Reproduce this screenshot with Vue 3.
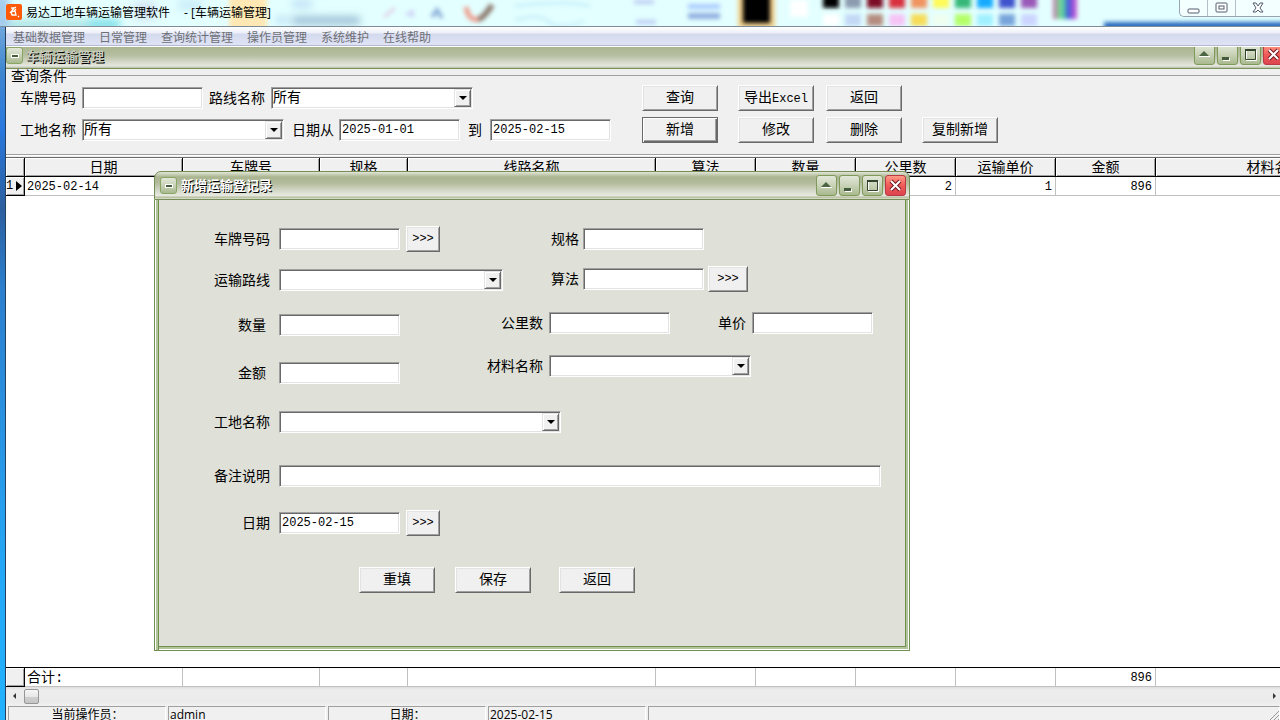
<script setup>
import { ref } from 'vue'

const menus = ['基础数据管理', '日常管理', '查询统计管理', '操作员管理', '系统维护', '在线帮助']

const columns = [
  { name: '日期', width: 158 },
  { name: '车牌号', width: 137 },
  { name: '规格', width: 88 },
  { name: '线路名称', width: 248 },
  { name: '算法', width: 100 },
  { name: '数量', width: 100 },
  { name: '公里数', width: 100 },
  { name: '运输单价', width: 100 },
  { name: '金额', width: 100 },
  { name: '材料名称', width: 238 }
]

const rows = [['2025-02-14', '', '', '', '', '', '2', '1', '896', '']]
const totals = ['合计:', '', '', '', '', '', '', '', '896', '']

const dateFrom = ref('2025-01-01')
const dateTo = ref('2025-02-15')
const recordDate = ref('2025-02-15')

// blurred palette that shines through the glass title bar
const swatches = [
  { x: 824, top: '#000', bottom: '#fff' },
  { x: 846, top: '#8c9bb0', bottom: '#c3d8f5' },
  { x: 868, top: '#7d1028', bottom: '#b58c80' },
  { x: 890, top: '#d8303f', bottom: '#f5c4f5' },
  { x: 912, top: '#f09460', bottom: '#f7dc58' },
  { x: 934, top: '#fffb58', bottom: '#effff0' },
  { x: 956, top: '#35b878', bottom: '#b4ff68' },
  { x: 978, top: '#18aaff', bottom: '#a0f0ff' },
  { x: 1000, top: '#4052cc', bottom: '#78a4dc' },
  { x: 1022, top: '#9a58b8', bottom: '#ccd4ff' }
]
</script>

<template>
  <div class="desktop">
    <div class="app">
      <header class="titlebar">
        <svg class="glass" viewBox="0 0 1280 26" preserveAspectRatio="none" aria-hidden="true">
          <defs>
            <filter id="soft" x="-20%" y="-40%" width="140%" height="180%"><feGaussianBlur stdDeviation="2" /></filter>
            <filter id="softer" x="-20%" y="-40%" width="140%" height="180%"><feGaussianBlur stdDeviation="4" /></filter>
            <linearGradient id="rainbow">
              <stop offset="0" stop-color="#d070b0" />
              <stop offset="0.35" stop-color="#60e890" />
              <stop offset="0.65" stop-color="#4050e0" />
              <stop offset="1" stop-color="#e060d0" />
            </linearGradient>
          </defs>
          <rect width="1280" height="26" fill="#e3ffff" />
          <g filter="url(#softer)">
            <rect x="-5" y="-5" width="14" height="36" fill="#9fc7ec" />
            <rect x="10" y="20" width="80" height="10" fill="#a9e3e2" />
            <rect x="88" y="20" width="32" height="9" fill="#71dbe5" />
            <rect x="134" y="2" width="22" height="18" fill="#d4e4f2" />
            <rect x="178" y="0" width="24" height="10" fill="#c8ecf9" />
            <rect x="292" y="17" width="68" height="7" fill="#8fb4cf" />
            <path d="M292 4h20M276 20h12" stroke="#b6d8f3" stroke-width="6" />
          </g>
          <g filter="url(#soft)">
            <rect x="229" y="-4" width="38" height="34" fill="#ffe8b4" />
            <path d="M384 17l11-9" stroke="#e2d2ea" stroke-width="3" />
            <path d="M404 14l10-5v9z" fill="#d0d6f6" />
            <path d="M432 17l5-7 5 8" fill="none" stroke="#8fb0da" stroke-width="4" />
            <path d="M514 6q52-6 76 0M515 20q25-7 34 2t35-1" fill="none" stroke="#cdf2fa" stroke-width="4" />
            <path d="M634 2h20M636 22h20" stroke="#c2d4f6" stroke-width="5" />
            <rect x="688" y="4" width="32" height="5" fill="#a9cbff" />
            <rect x="688" y="13" width="32" height="6" fill="#8faee0" />
            <rect x="738" y="-4" width="37" height="32" fill="#f2cf8a" />
            <rect x="790" y="0" width="18" height="17" fill="#fff" />
          </g>
          <g filter="url(#soft)">
            <path d="M466 7q3 15 13 12" fill="none" stroke="#ef9d8e" stroke-width="5" />
            <path d="M478 19q5 0 14-14" fill="none" stroke="#8c7a70" stroke-width="6" />
            <rect x="743" y="-6" width="27" height="29" fill="#000" />
            <g v-for="s in swatches" :key="s.x">
              <rect :x="s.x - 1" y="-6" width="16" height="14" :fill="s.top" />
              <rect :x="s.x - 1" y="14" width="16" height="12" :fill="s.bottom" />
            </g>
            <rect x="1053" y="-6" width="24" height="25" fill="url(#rainbow)" />
            <rect x="1104" y="22" width="190" height="8" fill="#2b6cc0" />
          </g>
        </svg>
        <div class="caption">
          <svg class="logo" viewBox="0 0 16 16" aria-hidden="true">
            <rect width="16" height="16" rx="2" fill="#ff5a0a" />
            <path d="M5 4h3l2-1M8 4L5 8l4-1 1 4H6l-1-3M8 7l2-2M12 12l1 1" fill="none" stroke="#fff" stroke-width="1.3" />
          </svg>
          <span>易达工地车辆运输管理软件</span>
          <span class="sub">- [车辆运输管理]</span>
        </div>
        <div class="sys-buttons">
          <button type="button" aria-label="最小化">
            <svg viewBox="0 0 14 12"><rect x="1" y="7" width="11" height="4" rx="1" fill="#fff" stroke="#555c70" /></svg>
          </button>
          <button type="button" aria-label="还原">
            <svg viewBox="0 0 14 12"><rect x="1" y="1" width="11" height="9" rx="1" fill="#fff" stroke="#555c70" /><rect x="4" y="4" width="5" height="3" fill="#fff" stroke="#555c70" /></svg>
          </button>
          <button type="button" class="sys-close" aria-label="关闭">
            <svg viewBox="0 0 14 12"><path d="M2 1h3l2 3 2-3h3L9 6l3 4H9L7 8l-2 2H2l3-4z" fill="#fff" stroke="#555c70" /></svg>
          </button>
        </div>
      </header>

      <nav class="menubar">
        <button v-for="menu in menus" :key="menu" type="button">{{ menu }}</button>
      </nav>

      <div class="skin-bar main-bar">
        <button type="button" class="skin-btn skin-menu" aria-label="窗口菜单"><i></i></button>
        <h1 class="skin-title">车辆运输管理</h1>
        <div class="skin-controls">
          <button type="button" class="skin-btn" aria-label="卷起">
            <svg viewBox="0 0 19 19"><path d="M4 11l5-5 5 5z" fill="#4c6643" /><path d="M4 11.500h11" stroke="#fff" /></svg>
          </button>
          <button type="button" class="skin-btn" aria-label="最小化子窗口">
            <svg viewBox="0 0 19 19"><path d="M5 13h7v3H5z" fill="#fff" /><path d="M4 12h7v3H4z" fill="#435a3b" /></svg>
          </button>
          <button type="button" class="skin-btn" aria-label="最大化子窗口">
            <svg viewBox="0 0 19 19"><path d="M5.500 5.500h10v10h-10z" fill="none" stroke="#fff" /><path d="M4.500 4.500h10v10h-10z" fill="none" stroke="#34452d" /><path d="M4 5h11" stroke="#34452d" stroke-width="2" /></svg>
          </button>
          <button type="button" class="skin-btn skin-close" aria-label="关闭子窗口">
            <svg viewBox="0 0 19 19"><path d="M5 5l9 9M14 5l-9 9" stroke="#721820" stroke-width="4" /><path d="M5 5l9 9M14 5l-9 9" stroke="#fff" stroke-width="2" /></svg>
          </button>
        </div>
      </div>

      <fieldset class="query">
        <legend>查询条件</legend>
        <div class="filters">
          <div class="filter-row">
            <label for="q-plate">车牌号码</label>
            <input id="q-plate" class="box" type="text" />
            <label for="q-route">路线名称</label>
            <span class="combo combo-m"><select id="q-route"><option>所有</option></select></span>
          </div>
          <div class="filter-row">
            <label for="q-site">工地名称</label>
            <span class="combo combo-m"><select id="q-site"><option>所有</option></select></span>
            <label for="q-from" class="label-date">日期从</label>
            <input id="q-from" v-model="dateFrom" class="box" type="text" />
            <label for="q-to" class="label-date">到</label>
            <input id="q-to" v-model="dateTo" class="box" type="text" />
          </div>
        </div>
        <div class="actions">
          <button type="button" class="btn">查询</button>
          <button type="button" class="btn">导出<span class="latin">Excel</span></button>
          <button type="button" class="btn">返回</button>
          <span></span>
          <button type="button" class="btn btn-default">新增</button>
          <button type="button" class="btn">修改</button>
          <button type="button" class="btn">删除</button>
          <button type="button" class="btn">复制新增</button>
        </div>
      </fieldset>

      <main class="grid-area">
        <table class="grid">
          <colgroup>
            <col class="col-mark" />
            <col v-for="c in columns" :key="c.name" :style="{ width: c.width + 'px' }" />
          </colgroup>
          <thead>
            <tr>
              <th></th>
              <th v-for="c in columns" :key="c.name">{{ c.name }}</th>
            </tr>
          </thead>
          <tbody>
            <tr v-for="(row, r) in rows" :key="r">
              <th class="mark"><span class="mark-in">{{ r + 1 }}<i></i></span></th>
              <td v-for="(cell, i) in row" :key="i" :class="{ num: i > 3 }">{{ cell }}</td>
            </tr>
          </tbody>
        </table>
      </main>

      <div class="totals">
        <table class="grid">
          <colgroup>
            <col class="col-mark" />
            <col v-for="c in columns" :key="c.name" :style="{ width: c.width + 'px' }" />
          </colgroup>
          <tbody>
            <tr>
              <th></th>
              <td v-for="(cell, i) in totals" :key="i" :class="{ num: i > 3, sum: i === 0 }">{{ cell }}</td>
            </tr>
          </tbody>
        </table>
      </div>

      <div class="scrollbar">
        <svg viewBox="0 0 5 8" aria-hidden="true"><path d="M4 1v6L1 4z" fill="#333" /></svg>
        <span class="thumb"></span>
        <svg class="scroll-right" viewBox="0 0 5 8" aria-hidden="true"><path d="M1 1v6l3-3z" fill="#333" /></svg>
      </div>

      <footer class="status">
        <span class="pane center">当前操作员：</span>
        <span class="pane">admin</span>
        <span class="pane center">日期：</span>
        <span class="pane">2025-02-15</span>
        <span class="pane rest">
          <svg class="grip" viewBox="0 0 10 10" aria-hidden="true"><path d="M0 10L10 0M4 10l6-6M8 10l2-2" stroke="#999" /></svg>
        </span>
      </footer>
    </div>

    <section class="dialog" role="dialog" aria-labelledby="dialog-title">
      <div class="skin-bar dialog-bar">
        <button type="button" class="skin-btn skin-menu" aria-label="对话框菜单"><i></i></button>
        <h2 id="dialog-title" class="skin-title">新增运输登记录</h2>
        <div class="skin-controls">
          <button type="button" class="skin-btn" aria-label="卷起对话框">
            <svg viewBox="0 0 19 19"><path d="M4 11l5-5 5 5z" fill="#4c6643" /><path d="M4 11.500h11" stroke="#fff" /></svg>
          </button>
          <button type="button" class="skin-btn" aria-label="最小化对话框">
            <svg viewBox="0 0 19 19"><path d="M5 13h7v3H5z" fill="#fff" /><path d="M4 12h7v3H4z" fill="#435a3b" /></svg>
          </button>
          <button type="button" class="skin-btn" aria-label="最大化对话框">
            <svg viewBox="0 0 19 19"><path d="M5.500 5.500h10v10h-10z" fill="none" stroke="#fff" /><path d="M4.500 4.500h10v10h-10z" fill="none" stroke="#34452d" /><path d="M4 5h11" stroke="#34452d" stroke-width="2" /></svg>
          </button>
          <button type="button" class="skin-btn skin-close" aria-label="关闭对话框">
            <svg viewBox="0 0 19 19"><path d="M5 5l9 9M14 5l-9 9" stroke="#721820" stroke-width="4" /><path d="M5 5l9 9M14 5l-9 9" stroke="#fff" stroke-width="2" /></svg>
          </button>
        </div>
      </div>
      <form class="form" @submit.prevent>
        <div class="upper">
          <div class="left-col">
            <div class="line">
              <label for="f-plate">车牌号码</label>
              <input id="f-plate" class="box" type="text" />
              <button type="button" class="btn btn-pick">&gt;&gt;&gt;</button>
            </div>
            <div class="line">
              <label for="f-route">运输路线</label>
              <span class="combo combo-r"><select id="f-route"><option></option></select></span>
            </div>
            <div class="line short">
              <label for="f-count">数量</label>
              <input id="f-count" class="box" type="text" />
            </div>
            <div class="line short">
              <label for="f-money">金额</label>
              <input id="f-money" class="box" type="text" />
            </div>
          </div>
          <div class="right-col">
            <div class="line wide">
              <label for="f-spec">规格</label>
              <input id="f-spec" class="box" type="text" />
            </div>
            <div class="line wide">
              <label for="f-algo">算法</label>
              <input id="f-algo" class="box" type="text" />
              <button type="button" class="btn btn-pick btn-pick-l">&gt;&gt;&gt;</button>
            </div>
            <div class="line">
              <label for="f-km">公里数</label>
              <input id="f-km" class="box" type="text" />
              <label for="f-price" class="price">单价</label>
              <input id="f-price" class="box" type="text" />
            </div>
            <div class="line">
              <label for="f-material">材料名称</label>
              <span class="combo combo-m"><select id="f-material"><option></option></select></span>
            </div>
          </div>
        </div>
        <div class="lower">
          <div class="line">
            <label for="f-site">工地名称</label>
            <span class="combo combo-l"><select id="f-site"><option></option></select></span>
          </div>
          <div class="line">
            <label for="f-note">备注说明</label>
            <input id="f-note" class="box box-note" type="text" />
          </div>
          <div class="line">
            <label for="f-date">日期</label>
            <input id="f-date" v-model="recordDate" class="box" type="text" />
            <button type="button" class="btn btn-pick">&gt;&gt;&gt;</button>
          </div>
        </div>
        <div class="form-actions">
          <button type="reset" class="btn">重填</button>
          <button type="button" class="btn">保存</button>
          <button type="button" class="btn btn-back">返回</button>
        </div>
      </form>
    </section>
  </div>
</template>

<style>
body {
  margin: 0;
  overflow: hidden;
}
</style>

<style scoped>
.desktop {
  position: relative;
  height: 100vh;
  overflow: hidden;
  background: linear-gradient(#8cbbe4, #3f86d0 10%, #2878de 18%, #2c5f9e 29%, #2c7fcd 40%, #25a8f8 80%, #22b2ff);
  font-family: "Liberation Mono", "Noto Sans CJK SC", monospace;
  font-size: 14px;
  color: #000;
}

.desktop * {
  box-sizing: border-box;
}

button,
input,
select {
  font: inherit;
  color: inherit;
  margin: 0;
}

.app {
  display: flex;
  flex-direction: column;
  height: 100%;
  margin-left: 5px;
  border-left: 1px solid #23415f;
  background: #f0f0f0;
}

/* title bar */
.titlebar {
  display: flex;
  justify-content: space-between;
  flex: none;
  height: 27px;
  margin-left: -6px;
  padding-left: 6px;
  border-bottom: 1px solid #7e8b98;
  position: relative;
  font-family: "Open Sans", "Noto Sans CJK SC", sans-serif;
  font-size: 12px;
}

.glass {
  position: absolute;
  top: 0;
  left: 0;
  width: 100%;
  height: 26px;
}

.caption {
  position: relative;
  display: flex;
  align-items: center;
  height: 24px;
  gap: 4px;
}

.logo {
  width: 16px;
  height: 16px;
}

.sub {
  margin-left: 10px;
}

.sys-buttons {
  position: relative;
  display: flex;
  height: 17px;
  border: 1px solid #98a5b0;
  border-top: 0;
  border-right: 0;
  border-radius: 0 0 0 5px;
  background: #f3ffff;
}

.sys-buttons button {
  display: flex;
  align-items: center;
  justify-content: center;
  width: 28px;
  padding: 0;
  border: 0;
  border-right: 1px solid #b3bfc8;
  background: none;
}

.sys-buttons .sys-close {
  width: 44px;
  border-right: 0;
}

.sys-buttons svg {
  width: 14px;
  height: 12px;
}

.menubar {
  display: flex;
  flex: none;
  align-items: center;
  gap: 14px;
  height: 20px;
  padding-left: 7px;
  border-bottom: 1px solid #fff;
  background: linear-gradient(#fff, #eceff8 6px, #d4daee 7px, #dfe3f5 18px, #b3b9d0 18px);
  font-family: "Noto Sans CJK SC", sans-serif;
  font-size: 12px;
}

.menubar button {
  padding: 0;
  border: 0;
  background: none;
  line-height: 18px;
  color: #6f7076;
}

/* olive skin */
.skin-bar {
  display: flex;
  align-items: center;
  flex: none;
}

.main-bar {
  height: 22px;
  border-bottom: 1px solid #79935a;
  background: linear-gradient(#aab590, #b6bfa1 40%, #dcdfd3 80%, #e6e8df 90%, #b4bba2);
  overflow: hidden;
}

.main-bar .skin-menu {
  margin-top: -4px;
}

.main-bar .skin-title {
  padding-left: 3px;
  color: #c8ccbe;
}

.main-bar .skin-controls {
  margin: -6px -4px 0 0;
}

.dialog-bar {
  height: 29px;
  padding: 0 3px 0 5px;
  border: 1px solid #778d57;
  border-radius: 7px 7px 0 0;
  background: linear-gradient(#e2e6d8, #aab590 5px, #b2bb9b 11px, #d9ddcf 20px, #e8eae1 24px, #b0b996 25px, #dfe3d5);
}

.dialog-bar .skin-title {
  padding: 2px 0 0 4px;
  color: #fff;
}

.skin-title {
  flex: 1;
  margin: 0;
  font-size: 13px;
  line-height: 18px;
  font-weight: bold;
  text-shadow: 1px 1px #000;
}

.skin-controls {
  display: flex;
  gap: 2px;
}

.skin-btn {
  display: flex;
  align-items: center;
  justify-content: center;
  width: 21px;
  height: 21px;
  padding: 0;
  border: 1px solid #7f995b;
  border-radius: 3px;
  background: linear-gradient(#e2e7d8, #c8d2b7 50%, #a9b98e);
}

.skin-btn svg {
  flex: none;
  width: 19px;
  height: 19px;
}

.skin-menu {
  width: 17px;
  height: 17px;
  border-color: #8aa664;
}

.skin-menu i {
  width: 8px;
  height: 4px;
  border: 1px solid #fff;
  background: #465f3a;
}

.skin-close {
  border-color: #b83a42;
  background: linear-gradient(#ff9a86, #f05a58 50%, #dc4450);
}

/* win classic controls */
.box {
  flex: none;
  width: 121px;
  height: 22px;
  padding: 0 2px;
  border: 1px solid;
  border-color: #a0a0a0 #fff #fff #a0a0a0;
  border-radius: 0;
  outline: 0;
  background: #fff;
  box-shadow: inset 1px 1px #696969, inset -1px -1px #e3e3e3;
  font-size: 12px;
}

.combo {
  position: relative;
  display: block;
  flex: none;
  height: 22px;
  border: 1px solid;
  border-color: #a0a0a0 #fff #fff #a0a0a0;
  background: #fff;
  box-shadow: inset 1px 1px #696969, inset -1px -1px #e3e3e3;
}

.combo select {
  display: block;
  width: 100%;
  height: 20px;
  padding: 0 20px 0 1px;
  border: 0;
  outline: 0;
  appearance: none;
  background: none;
  line-height: 18px;
}

.combo::before {
  content: "";
  position: absolute;
  top: 1px;
  right: 1px;
  width: 17px;
  height: 18px;
  border: 1px solid;
  border-color: #e3e3e3 #696969 #696969 #e3e3e3;
  background: #f0f0f0;
  box-shadow: inset 1px 1px #fff, inset -1px -1px #a0a0a0;
  box-sizing: border-box;
  pointer-events: none;
}

.combo::after {
  content: "";
  position: absolute;
  top: 8px;
  right: 5px;
  border: 4px solid transparent;
  border-top-color: #000;
  border-bottom: 0;
  pointer-events: none;
}

.combo-m {
  width: 202px;
}

.combo-r {
  width: 224px;
}

.combo-l {
  width: 282px;
}

.btn {
  flex: none;
  width: 76px;
  height: 26px;
  padding: 0;
  border: 1px solid;
  border-color: #fff #696969 #696969 #fff;
  border-radius: 0;
  background: #f0f0f0;
  box-shadow: inset 1px 1px #e3e3e3, inset -1px -1px #a0a0a0;
  line-height: 20px;
  white-space: nowrap;
}

.btn-default {
  border-color: #696969;
  box-shadow: inset 1px 1px #fff, inset -1px -1px #696969, inset -2px -2px #a0a0a0;
}

.btn-pick {
  width: 34px;
  font-size: 12px;
}

.btn-pick-l {
  width: 40px;
}

.latin {
  font-size: 12px;
}

label {
  flex: none;
  padding-top: 2px;
  line-height: 20px;
  white-space: nowrap;
}

/* query panel */
.query {
  display: flex;
  flex: none;
  gap: 32px;
  margin: 0 0 2px;
  padding: 0 0 8px;
  border: 0 solid #a0a0a0;
  border-width: 1px 0;
  box-shadow: 0 1px #fff;
  min-width: 0;
}

.query legend {
  height: 13px;
  padding: 0 1px 0 5px;
  line-height: 16px;
}

.filters {
  width: 604px;
  padding-left: 14px;
}

.filter-row {
  display: flex;
  align-items: center;
  gap: 6px;
  height: 32px;
}

.label-date {
  width: 43px;
  padding-left: 2px;
}

.label-date ~ .label-date {
  width: 18px;
}

.actions {
  display: grid;
  grid-template-columns: 96px 88px 96px 76px;
  grid-auto-rows: 32px;
  align-items: center;
}

/* data grid */
.grid-area {
  flex: 1;
  min-height: 0;
  overflow: hidden;
  border-top: 1px solid #696969;
  background: #fff;
}

.totals {
  flex: none;
  overflow: hidden;
  border-top: 1px solid #000;
  background: #fff;
}

.grid {
  width: 1388px;
  table-layout: fixed;
  border-collapse: separate;
  border-spacing: 0;
}

.col-mark {
  width: 19px;
}

.grid th,
.grid td {
  height: 19px;
  padding: 2px 2px 0;
  font-weight: normal;
  line-height: 16px;
  white-space: nowrap;
}

.grid th {
  border-right: 1px solid #000;
  border-bottom: 1px solid #000;
  background: #f0f0f0;
  box-shadow: inset 1px 1px #fff, inset -1px -1px #a0a0a0;
}

.grid td {
  border-right: 1px solid #c0c0c0;
  border-bottom: 1px solid #c0c0c0;
  font-size: 12px;
}

.grid .num {
  padding-right: 3px;
  text-align: right;
}

.grid .sum {
  font-size: 14px;
}

.grid .mark {
  padding: 0;
  font-size: 12px;
}

.mark-in {
  display: flex;
  align-items: center;
  gap: 3px;
}

.mark-in i {
  border: 5px solid transparent;
  border-left: 6px solid #000;
  border-right: 0;
}

.scrollbar {
  display: flex;
  flex: none;
  align-items: center;
  height: 18px;
  padding: 0 3px 0 6px;
  background: linear-gradient(#dedede, #ededed 3px, #ebebeb 15px, #f0f0f0);
}

.scrollbar svg {
  width: 5px;
  height: 8px;
}

.scrollbar .scroll-right {
  margin-left: auto;
}

.thumb {
  width: 15px;
  height: 15px;
  margin-left: 7px;
  border: 1px solid #979797;
  border-radius: 2px;
  background: linear-gradient(#f6f6f6, #e8e8e8 50%, #d0d0d0 50%, #c6c6c6);
}

.status {
  display: flex;
  flex: none;
  gap: 2px;
  height: 15px;
  padding: 1px 0 0 2px;
  overflow: hidden;
  font-family: "Open Sans", "Noto Sans CJK SC", sans-serif;
  font-size: 12px;
}

.pane {
  flex: none;
  width: 158px;
  padding-left: 1px;
  border: 1px solid;
  border-color: #a0a0a0 #fff #fff #a0a0a0;
  height: 22px;
  line-height: 16px;
}

.center {
  text-align: center;
}

.rest {
  display: flex;
  flex: 1;
  justify-content: flex-end;
}

.grip {
  width: 10px;
  height: 10px;
  margin-top: 4px;
}

/* record dialog */
.dialog {
  position: absolute;
  top: 171px;
  left: 154px;
  width: 756px;
}

.form {
  padding: 18px 0 32px;
  border: 1px solid #6f8f4f;
  border-top: 0;
  background: #dfe0d8;
  box-shadow: inset 1px 0 #fff, inset 3px 0 #b3c39c, inset 4px 0 #6f8f4f, inset -1px -1px #fff, inset -3px -3px #b3c39c, inset -4px -4px #6f8f4f;
}

.upper {
  display: flex;
}

.left-col {
  display: grid;
  grid-template-rows: 42px 40px 50px 46px;
  width: 330px;
}

.right-col {
  display: grid;
  grid-template-rows: 42px 38px 50px 36px;
}

.lower {
  display: grid;
  grid-template-rows: 52px 56px 38px;
}

.line {
  display: flex;
  align-items: center;
  gap: 6px;
}

.left-col label,
.lower label {
  width: 118px;
  padding-right: 3px;
  text-align: right;
}

.left-col .short label {
  padding-right: 7px;
}

.right-col label {
  width: 58px;
  text-align: right;
}

.right-col .wide label {
  width: 94px;
}

.right-col .wide {
  gap: 4px;
}

.right-col .price {
  width: 70px;
}

.box-note {
  width: 602px;
}

.form-actions {
  display: flex;
  align-items: center;
  gap: 20px;
  height: 76px;
  padding-left: 204px;
}

.btn-back {
  margin-left: 8px;
}
</style>
